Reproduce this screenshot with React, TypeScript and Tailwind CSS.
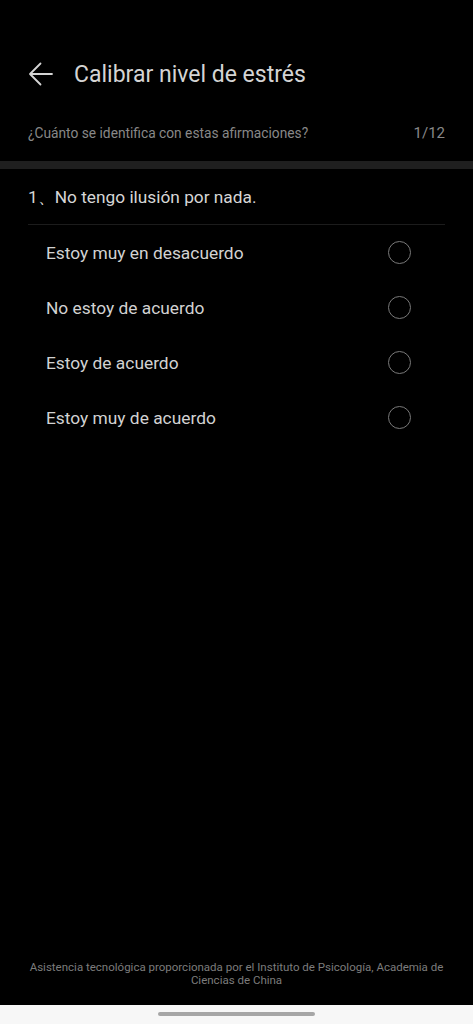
const options = [
  "Estoy muy en desacuerdo",
  "No estoy de acuerdo",
  "Estoy de acuerdo",
  "Estoy muy de acuerdo",
];

const BackArrow = () => (
  <svg width="26" height="26" viewBox="0 0 26 26" fill="none">
    <path
      d="M24 13H2.5M12.5 2.5L2 13l10.5 10.5"
      stroke="#d4d4d4"
      strokeWidth="1.8"
      strokeLinecap="round"
      strokeLinejoin="round"
    />
  </svg>
);

export default function App() {
  return (
    <div className="flex h-[1024px] w-full flex-col bg-black font-['Roboto',sans-serif]">
      {/* header */}
      <div className="mt-[46px] flex h-[56px] items-center gap-[20px] px-[28px]">
        <BackArrow />
        <h1 className="pt-[3px] text-[23px] text-[#d4d4d4]">Calibrar nivel de estrés</h1>
      </div>

      <div className="flex h-[59px] items-center justify-between px-[28px] pt-[4px]">
        <span className="text-[13.75px] text-[#888888]">¿Cuánto se identifica con estas afirmaciones?</span>
        <span className="text-[15px] text-[#888888]">1/12</span>
      </div>

      <div className="h-[8px] bg-[#1f1f1f]" />

      {/* question */}
      <div className="mx-[28px] flex h-[56px] items-center border-b border-[#1c1c1c] pt-[2px]">
        <p className="text-[17.3px] text-[#d6d6d6]">1、No tengo ilusión por nada.</p>
      </div>

      <div className="flex flex-col pl-[46px] pr-[62px]">
        {options.map((o) => (
          <div key={o} className="flex h-[55px] items-center justify-between">
            <span className="pt-[1px] text-[17.35px] text-[#d2d2d2]">{o}</span>
            <span className="h-[23px] w-[23px] rounded-full border-[1.5px] border-[#7a7a7a]" />
          </div>
        ))}
      </div>

      <div className="flex-1" />

      <p className="px-[20px] pb-[18px] text-center text-[11.5px] leading-[13px] text-[#7c7c7c]">
        Asistencia tecnológica proporcionada por el Instituto de Psicología, Academia de Ciencias de China
      </p>

      <div className="flex h-[19px] items-start justify-center bg-[#f7f7f7] pt-[7px]">
        <div className="h-[4px] w-[157px] rounded-full bg-[#a6a6a6]" />
      </div>
    </div>
  );
}
